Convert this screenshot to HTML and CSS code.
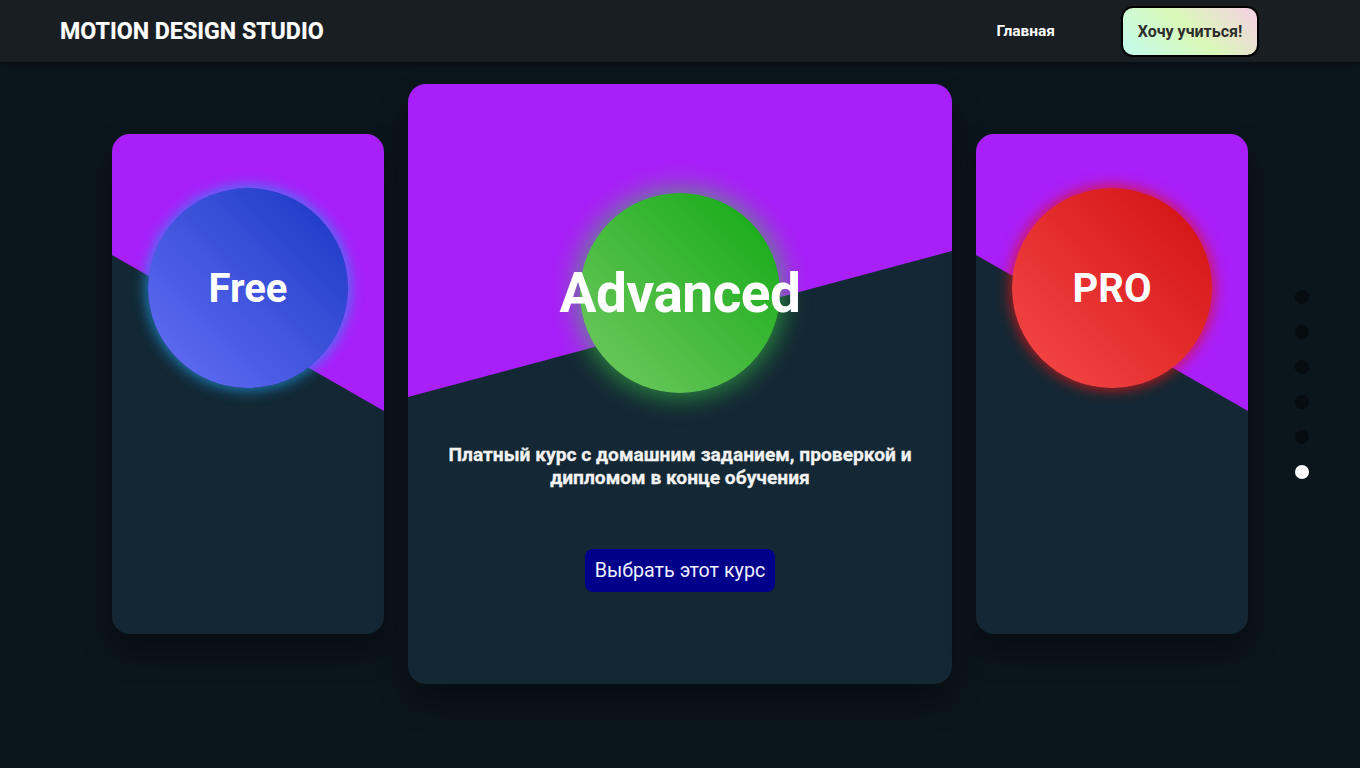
FILE: index.html
```html
<!DOCTYPE html>
<html lang="ru">
<head>
<meta charset="utf-8">
<title>Motion Design Studio</title>
<link rel="stylesheet" href="styles.css">
</head>
<body>
<header class="site-header">
  <div class="logo">MOTION DESIGN STUDIO</div>
  <nav class="nav">
    <a class="nav-link" href="#">Главная</a>
    <a class="cta" href="#">Хочу учиться!</a>
  </nav>
</header>
<main class="slider">
  <div class="cards">
    <section class="card card-side">
      <div class="circle circle-blue"><span class="title">Free</span></div>
    </section>
    <section class="card card-main">
      <div class="circle circle-green"><span class="title title-big">Advanced</span></div>
      <p class="desc">Платный курс с домашним заданием, проверкой и дипломом в конце обучения</p>
      <a class="choose" href="#">Выбрать этот курс</a>
    </section>
    <section class="card card-side">
      <div class="circle circle-red"><span class="title">PRO</span></div>
    </section>
  </div>
  <ul class="dots">
    <li class="dot"></li>
    <li class="dot"></li>
    <li class="dot"></li>
    <li class="dot"></li>
    <li class="dot"></li>
    <li class="dot dot-active"></li>
  </ul>
</main>
</body>
</html>
```
FILE: styles.css
```css
* { box-sizing: border-box; }
html, body { margin: 0; padding: 0; }
body {
  background: #0b151c;
  font-family: Roboto, "Liberation Sans", sans-serif;
  color: #fff;
  height: 768px;
  overflow: hidden;
}
.site-header {
  height: 62px;
  background: #181e22;
  display: flex;
  align-items: center;
  justify-content: space-between;
  padding: 0 101px 0 60px;
  box-shadow: 0 2px 6px rgba(0,0,0,0.35);
  position: relative;
  z-index: 2;
}
.logo {
  font-weight: 700;
  font-size: 23.2px;
  color: #fff;
  -webkit-text-stroke: 0.2px #fff;
}
.nav {
  display: flex;
  align-items: center;
  gap: 66px;
}
.nav-link {
  color: #fff;
  font-weight: 700;
  font-size: 15.5px;
  text-decoration: none;
}
.cta {
  display: flex;
  align-items: center;
  justify-content: center;
  width: 138px;
  height: 51px;
  border: 2px solid #000;
  border-radius: 12px;
  background: linear-gradient(45deg, #c2fbee 0%, #d9f9b8 50%, #f5cfe3 100%);
  color: #2d2d2d;
  font-weight: 700;
  font-size: 16px;
  text-decoration: none;
}
.slider {
  position: relative;
  padding-top: 22px;
}
.cards {
  display: flex;
  justify-content: center;
  align-items: center;
  gap: 24px;
}
.card {
  position: relative;
  background: #132834;
  border-radius: 18px;
  overflow: hidden;
  display: flex;
  flex-direction: column;
  align-items: center;
  box-shadow: 0 18px 30px rgba(0,0,0,0.35);
}
.card::before {
  content: "";
  position: absolute;
  inset: 0;
  background: #a91ff9;
}
.card-side {
  width: 272px;
  height: 500px;
  padding-top: 54px;
}
.card-side::before {
  clip-path: polygon(0 0, 100% 0, 100% 277px, 0 121px);
}
.card-main {
  width: 544px;
  height: 600px;
  padding-top: 109px;
}
.card-main::before {
  clip-path: polygon(0 0, 100% 0, 100% 167px, 0 313px);
}
.circle {
  position: relative;
  width: 200px;
  height: 200px;
  border-radius: 50%;
  display: flex;
  align-items: center;
  justify-content: center;
  flex-shrink: 0;
}
.circle-blue {
  background: linear-gradient(to top right, #6670f6 0%, #1837c2 100%);
  box-shadow: 0 0 14px 2px rgba(30, 160, 240, 0.75);
}
.circle-green {
  background: linear-gradient(to top right, #74ca64 0%, #10a912 100%);
  box-shadow: 0 0 24px 5px rgba(60, 200, 70, 0.6);
}
.circle-red {
  background: linear-gradient(to top right, #f74a4a 0%, #d20f0f 100%);
  box-shadow: 0 0 14px 2px rgba(230, 20, 20, 0.8);
}
.title {
  font-weight: 700;
  font-size: 40px;
  color: #fff;
  white-space: nowrap;
}
.title-big {
  font-size: 55px;
  letter-spacing: -0.5px;
}
.desc {
  position: relative;
  margin: 50px 0 0;
  padding: 0 30px;
  text-align: center;
  font-weight: 700;
  font-size: 19.2px;
  line-height: 23px;
  color: #f2f2f2;
  -webkit-text-stroke: 0.3px #f2f2f2;
}
.choose {
  position: relative;
  margin-top: 60px;
  display: flex;
  align-items: center;
  justify-content: center;
  width: 190px;
  height: 43px;
  background: #00008b;
  border-radius: 8px;
  color: #eef0ff;
  font-size: 19.7px;
  text-decoration: none;
}
.dots {
  position: absolute;
  right: 51px;
  top: 228px;
  margin: 0;
  padding: 0;
  list-style: none;
  display: flex;
  flex-direction: column;
  gap: 21px;
}
.dot {
  width: 14px;
  height: 14px;
  border-radius: 50%;
  background: #060c10;
}
.dot-active { background: #fff; }
```
